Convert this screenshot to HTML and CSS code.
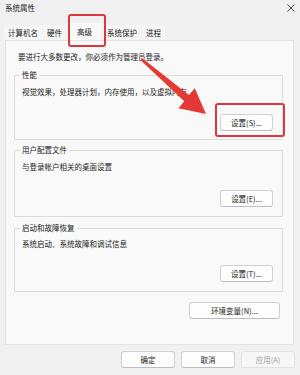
FILE: index.html
```html
<!DOCTYPE html>
<html lang="zh-CN">
<head>
<meta charset="utf-8">
<title>系统属性</title>
<link rel="stylesheet" href="styles.css">
</head>
<body>
<div class="window">
  <div class="titlebar">
    <span class="title">系统属性</span>
    <svg class="close" width="8" height="8" viewBox="0 0 8 8"><path d="M0.5 0.5 L7.5 7.5 M7.5 0.5 L0.5 7.5" stroke="#333" stroke-width="0.9" fill="none"/></svg>
  </div>
  <div class="tabs">
    <div class="tab">计算机名</div>
    <div class="tab">硬件</div>
    <div class="tab tab-active">高级</div>
    <div class="tab">系统保护</div>
    <div class="tab">进程</div>
  </div>
  <div class="panel">
    <p class="notice">要进行大多数更改，你必须作为管理员登录。</p>
    <fieldset class="group g1">
      <legend>性能</legend>
      <p class="desc">视觉效果，处理器计划，内存使用，以及虚拟内存</p>
      <div class="row"><button class="btn">设置(S)...</button></div>
    </fieldset>
    <fieldset class="group g2">
      <legend>用户配置文件</legend>
      <p class="desc">与登录帐户相关的桌面设置</p>
      <div class="row"><button class="btn">设置(E)...</button></div>
    </fieldset>
    <fieldset class="group g3">
      <legend>启动和故障恢复</legend>
      <p class="desc">系统启动、系统故障和调试信息</p>
      <div class="row"><button class="btn">设置(T)...</button></div>
    </fieldset>
    <div class="env-row"><button class="btn btn-env">环境变量(N)...</button></div>
  </div>
  <div class="footer">
    <button class="btn btn-foot">确定</button>
    <button class="btn btn-foot">取消</button>
    <button class="btn btn-foot btn-disabled">应用(A)</button>
  </div>
  <div class="mark mark-tab"></div>
  <div class="mark mark-btn"></div>
  <svg class="arrow" width="300" height="375" viewBox="0 0 300 375">
    <polygon points="140.9,60.4 184.3,101.2 178.4,108.2 206,114 194.8,88.2 188.9,95.0 142.7,58.6" fill="#e53935"/>
  </svg>
</div>
</body>
</html>
```

FILE: styles.css
```css
* { box-sizing: border-box; }
html, body { margin: 0; padding: 0; }
body {
  width: 300px;
  height: 375px;
  background: #f0f0f0;
  font-family: "Noto Sans CJK SC", "Noto Sans", sans-serif;
  font-size: 7.5px;
  color: #1a1a1a;
  overflow: hidden;
}
.window {
  position: relative;
  width: 300px;
  height: 375px;
  background: #f0f0f0;
}
.titlebar {
  height: 25px;
  display: flex;
  justify-content: space-between;
  align-items: flex-start;
  padding: 3px 5px 0 5px;
  line-height: 10px;
}
.close { margin-top: 1px; margin-right: 0; }
.tabs {
  display: flex;
  gap: 1px;
  padding-left: 4px;
  height: 15px;
}
.tab {
  padding: 0 4px;
  line-height: 15px;
  height: 15px;
  background: #f5f5f5;
  white-space: nowrap;
}
.tab-active {
  padding: 0 10px;
  background: #f9f9f9;
  margin-top: -2px;
  height: 17px;
  line-height: 18px;
  position: relative;
  z-index: 1;
}
.panel {
  margin: 0 6px 0 5px;
  height: 305px;
  background: #f9f9f9;
  border: 1px solid #e3e3e3;
  padding: 11px 10px 0 8px;
}
.notice {
  margin: 0 0 8px 4px;
  line-height: 10px;
}
.group {
  margin: 0;
  border: 1px solid #dcdcdc;
  border-radius: 1px;
  padding: 0 9px 0 7px;
}
.group legend {
  padding: 0 2px;
  margin-left: -2px;
  line-height: 10px;
}
.desc {
  margin: 7px 0 0 0;
  line-height: 10px;
}
.row {
  display: flex;
  justify-content: flex-end;
}
.g1 .row { margin-top: 17px; }
.g1 { padding-bottom: 8px; }
.g2 { margin-top: 5px; padding-bottom: 9px; }
.g2 .row { margin-top: 18px; }
.g3 { margin-top: 6px; padding-bottom: 9px; }
.g3 .desc { margin-top: 6px; }
.g3 .row { margin-top: 16px; }
.btn {
  font-family: inherit;
  font-size: 7.5px;
  color: #1a1a1a;
  width: 53px;
  height: 17px;
  padding: 0;
  border: 1px solid #d0d0d0;
  border-bottom-color: #bdbdbd;
  border-radius: 3px;
  background: #fdfdfd;
  line-height: 15px;
}
.env-row {
  display: flex;
  justify-content: flex-end;
  margin-top: 10px;
  padding-right: 3px;
}
.btn-env { width: 91px; }
.footer {
  display: flex;
  justify-content: flex-end;
  gap: 6px;
  padding: 6px 5px 0 0;
}
.btn-foot { width: 54px; }
.btn-disabled {
  color: #a0a0a0;
  background: #f7f7f7;
  border-color: #e2e2e2;
}
.mark {
  position: absolute;
  border: 2px solid #d9383e;
  border-radius: 3px;
  z-index: 3;
}
.mark-tab { left: 68px; top: 14px; width: 38px; height: 33px; }
.mark-btn { left: 215px; top: 103px; width: 70px; height: 34px; }
.arrow {
  position: absolute;
  left: 0;
  top: 0;
  z-index: 4;
  pointer-events: none;
}
```
